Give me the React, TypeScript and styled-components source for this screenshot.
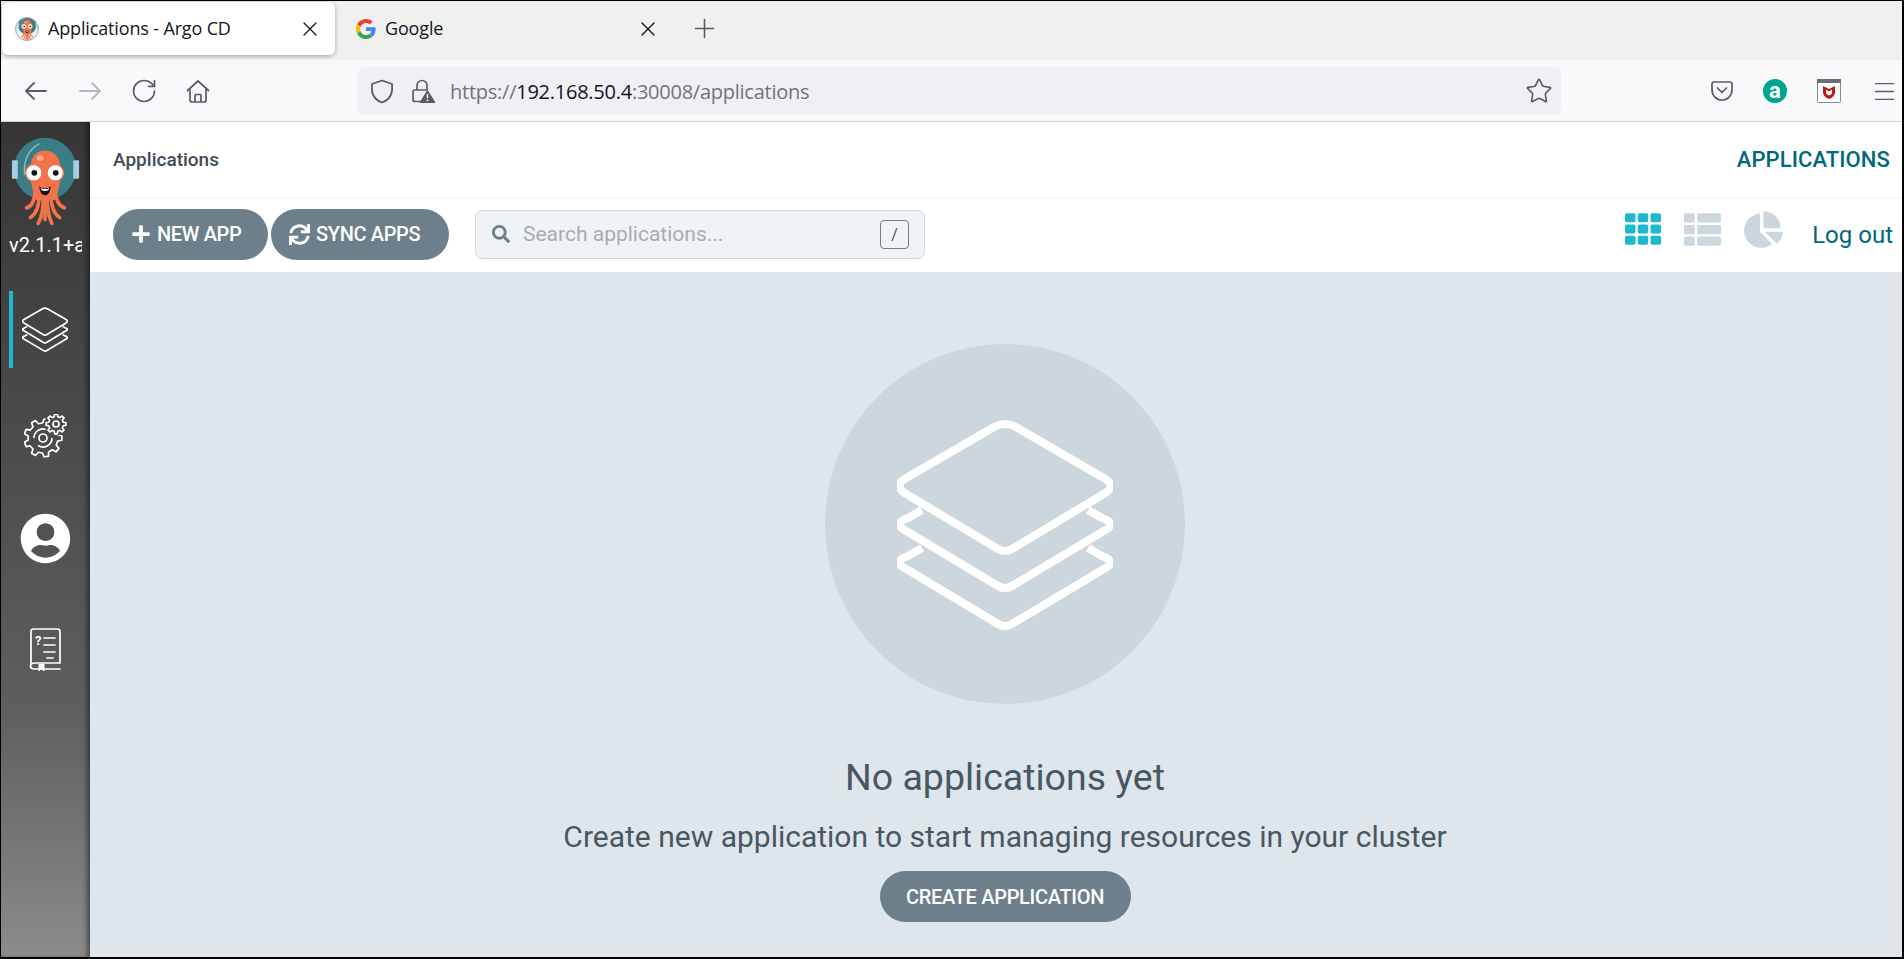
import * as React from 'react'
import styled, { createGlobalStyle } from 'styled-components'
import { RotateCw, Star, X, Plus, Menu } from 'lucide-react'
import { FaPlus, FaSync, FaSearch, FaTh, FaThList, FaChartPie, FaUserCircle } from 'react-icons/fa'

const GlobalStyle = createGlobalStyle`
  html, body {
    margin: 0;
    padding: 0;
    height: 100%;
    overflow: hidden;
  }
  body {
    font-family: Roboto, "Liberation Sans", sans-serif;
  }
`

const Frame = styled.div`
  box-sizing: border-box;
  width: 1904px;
  height: 959px;
  display: flex;
  flex-direction: column;
  overflow: hidden;
  border-style: solid;
  border-color: #000;
  border-width: 1px 2px 2px 1px;
  background: #fff;
`

const TabStrip = styled.div`
  flex: none;
  height: 59px;
  display: flex;
  align-items: flex-start;
  padding: 1px 0 0 1px;
  box-sizing: border-box;
  background: #f0f0f0;
  font-family: "Open Sans", "Noto Sans", sans-serif;
`

const Tab = styled.div<{ $active?: boolean }>`
  box-sizing: border-box;
  width: 333px;
  height: 53px;
  display: flex;
  align-items: center;
  padding: 0 13px 0 ${props => (props.$active ? '13px' : '16px')};
  margin-right: ${props => (props.$active ? '5px' : '16px')};
  border-radius: 6px;
  background: ${props => (props.$active ? '#fff' : 'transparent')};
  box-shadow: ${props => (props.$active ? '0 1px 4px rgba(0, 0, 0, 0.35)' : 'none')};
  color: #15141a;
`

const TabTitle = styled.span`
  flex: 1;
  margin: 0 0 2px 9px;
  font-size: 18px;
  letter-spacing: -0.15px;
  white-space: nowrap;
`

const NewTab = styled.div`
  height: 53px;
  display: flex;
  align-items: center;
  color: #5b5b66;
`

const NavBar = styled.div`
  flex: none;
  box-sizing: border-box;
  height: 62px;
  display: flex;
  align-items: center;
  padding: 1px 4px 0 8px;
  background: #f9f9fb;
  border-bottom: 1px solid #cfcfd8;
  color: #5b5b66;
  font-family: "Open Sans", "Noto Sans", sans-serif;
`

const NavButtons = styled.div`
  flex: none;
  display: grid;
  grid-template-columns: repeat(4, 54px);
  justify-items: center;
  align-items: center;
  width: 349px;
`

const UrlBar = styled.div`
  flex: none;
  box-sizing: border-box;
  width: 1203px;
  height: 48px;
  display: flex;
  align-items: center;
  padding: 0 8px 0 12px;
  border-radius: 6px;
  background: #f0f0f4;
`

const LockSlot = styled.div`
  display: flex;
  margin-left: 17px;
`

const UrlText = styled.div`
  flex: 1;
  margin: 1px 0 0 15px;
  font-size: 20px;
  letter-spacing: -0.25px;
  color: #72727d;
  white-space: nowrap;
`

const UrlHost = styled.span`
  color: #15141a;
`

const Extensions = styled.div`
  flex: 1;
  display: flex;
  align-items: center;
  justify-content: flex-end;
  gap: 30px;
`

const AmazonBadge = styled.div`
  width: 24px;
  height: 24px;
  border-radius: 50%;
  display: flex;
  align-items: center;
  justify-content: center;
  background: #00a58e;
  color: #fff;
  font-family: Roboto, sans-serif;
  font-size: 22px;
  font-weight: 700;
  line-height: 22px;
`

const AppArea = styled.div`
  flex: 1;
  min-height: 0;
  display: flex;
`

const Sidebar = styled.nav`
  flex: none;
  box-sizing: border-box;
  width: 89px;
  display: flex;
  flex-direction: column;
  background: linear-gradient(to bottom, #363636 0%, #474747 30%, #5e5e5e 70%, #8b8b8b 100%);
  box-shadow: inset -5px 0 5px -2px rgba(0, 0, 0, 0.45);
  overflow: hidden;
`

const LogoBox = styled.div`
  display: flex;
  padding: 8px 0 0 9px;
`

const Version = styled.div`
  width: 73px;
  margin: 6px 0 0 8px;
  overflow: hidden;
  white-space: nowrap;
  color: #fff;
  font-size: 20px;
  line-height: 24px;
`

const NavItem = styled.div<{ $gap: number; $active?: boolean }>`
  position: relative;
  flex: none;
  height: 77px;
  margin-top: ${props => props.$gap}px;
  display: flex;
  align-items: center;
  justify-content: center;
  padding-right: 1px;
  color: #fff;
  &::before {
    content: '';
    display: ${props => (props.$active ? 'block' : 'none')};
    position: absolute;
    left: 8px;
    top: 0;
    bottom: 0;
    width: 4px;
    background: #1fb8cf;
  }
`

const Main = styled.main`
  flex: 1;
  min-width: 0;
  display: flex;
  flex-direction: column;
`

const TopBar = styled.header`
  flex: none;
  box-sizing: border-box;
  height: 76px;
  display: flex;
  align-items: center;
  justify-content: space-between;
  padding: 0 12px 0 23px;
  border-bottom: 1px solid #eef1f4;
`

const PageTitle = styled.div`
  font-size: 19px;
  font-weight: 500;
  color: #3f4c56;
`

const PageLink = styled.div`
  font-size: 22px;
  font-weight: 500;
  letter-spacing: 0.1px;
  color: #00687c;
`

const ToolBar = styled.div`
  flex: none;
  box-sizing: border-box;
  height: 74px;
  display: flex;
  align-items: center;
  padding: 0 9px 2px 23px;
`

const PillButton = styled.button<{ $width: number }>`
  box-sizing: border-box;
  width: ${props => props.$width}px;
  height: 51px;
  display: inline-flex;
  align-items: center;
  gap: 6px;
  margin-right: 3px;
  padding: 0 0 0 18px;
  border: 0;
  border-radius: 26px;
  background: #6d7f8b;
  color: #fff;
  font-family: Roboto, sans-serif;
  font-size: 20px;
  font-weight: 500;
  letter-spacing: -0.35px;
`

const SearchBox = styled.div`
  box-sizing: border-box;
  width: 450px;
  height: 49px;
  margin-left: 23px;
  display: flex;
  align-items: center;
  padding: 0 15px 0 16px;
  border: 1px solid #ccd6dd;
  border-radius: 7px;
  background: #eff3f6;
  color: #6d7f8b;
`

const SearchText = styled.div`
  flex: 1;
  margin-left: 13px;
  font-size: 21px;
  color: #a3adb5;
`

const KeyHint = styled.div`
  box-sizing: border-box;
  width: 29px;
  height: 29px;
  display: flex;
  align-items: center;
  justify-content: center;
  border: 1px solid #6d7f8b;
  border-radius: 4px;
  font-size: 16px;
  color: #495763;
`

const ViewToggles = styled.div`
  margin: 0 0 10px auto;
  display: flex;
  align-items: center;
  gap: 23px;
`

const ViewIcon = styled.div<{ $active?: boolean }>`
  display: flex;
  color: ${props => (props.$active ? '#1fb8cf' : '#ccd6dd')};
`

const LogOut = styled.div`
  margin: 2px 0 0 29px;
  font-size: 24px;
  color: #00687c;
`

const EmptyState = styled.section`
  flex: 1;
  display: flex;
  flex-direction: column;
  align-items: center;
  padding: 72px 0 0 18px;
  background: #dee6eb;
  color: #495763;
`

const EmptyCircle = styled.div`
  width: 360px;
  height: 360px;
  flex: none;
  display: flex;
  align-items: center;
  justify-content: center;
  border-radius: 50%;
  background: #ccd6dd;
  color: #fff;
`

const EmptyTitle = styled.div`
  margin-top: 51px;
  font-size: 37.5px;
  line-height: 44px;
`

const EmptyText = styled.div`
  margin-top: 20px;
  font-size: 30px;
  line-height: 36px;
`

const CreateButton = styled(PillButton)`
  margin: 16px 0 0;
  padding: 0;
  justify-content: center;
  letter-spacing: -0.3px;
`

const Layers = ({ size }: { size: number }) => (
  <svg width={size} height={(size * 211) / 216} viewBox="0 -1 216 211" fill="none" stroke="currentColor" strokeWidth="8">
    <path d="M97 7 Q108 1 119 7 L205 57 Q222 66 205 75 L115 129 Q108 133 101 129 L11 75 Q-6 66 11 57 Z" />
    <path d="M25 90 L11 98 Q-6 104 11 112 L101 166 Q108 170 115 166 L205 112 Q222 104 205 98 L191 90" />
    <path d="M25 128 L11 136 Q-6 142 11 150 L101 204 Q108 208 115 204 L205 150 Q222 142 205 136 L191 128" />
  </svg>
)

// outline of a cog, teeth as trapezoids round the centre
const gearPath = (cx: number, cy: number, outer: number, inner: number, teeth: number) => {
  const step = (Math.PI * 2) / teeth
  const pts: string[] = []
  for (let i = 0; i < teeth; i++) {
    const a = i * step
    const at = (r: number, t: number) =>
      `${(cx + r * Math.cos(a + t * step)).toFixed(2)} ${(cy + r * Math.sin(a + t * step)).toFixed(2)}`
    pts.push(at(inner, -0.3), at(outer, -0.17), at(outer, 0.17), at(inner, 0.3))
  }
  return `M${pts.join(' L')} Z`
}

const SettingsIcon = () => (
  <svg width="43" height="44" viewBox="0 0 43 44" fill="none" stroke="currentColor" strokeWidth="1.7" strokeLinejoin="round">
    <mask id="gear-cut">
      <rect width="43" height="44" fill="#fff" stroke="none" />
      <circle cx="32" cy="10" r="11.5" fill="#000" stroke="none" />
    </mask>
    <g mask="url(#gear-cut)">
      <path d={gearPath(19, 24, 19, 15, 9)} />
      <path d="M10 24 A9 9 0 0 1 22 15.5" />
      <path d="M28 24 A9 9 0 0 1 14 31.5" />
    </g>
    <circle cx="19" cy="24" r="4" />
    <path d={gearPath(32, 10, 10, 7.5, 8)} />
    <circle cx="32" cy="10" r="3" />
  </svg>
)

const DocsIcon = () => (
  <svg width="32" height="43" viewBox="0 0 32 43" fill="none" stroke="currentColor" strokeWidth="1.7" strokeLinecap="round">
    <path d="M2 36 V3.500 Q2 1 4.500 1 H28.500 Q31 1 31 3.500 V35 H6 Q1.500 35 1.500 38 Q1.500 41 6 41 H31" />
    <path d="M15 10 H26 M15 17 H26 M15 24 H26 M18 30 H24" />
    <path d="M10 36 V43 L12.500 40.500 L15 43 V36" fill="currentColor" strokeWidth="1" />
    <text x="6" y="17" fill="currentColor" stroke="none" fontFamily="Roboto, sans-serif" fontSize="13" fontWeight="700">?</text>
  </svg>
)

const ArgoLogo = ({ width }: { width: number }) => (
  <svg width={width} height={(width * 100) / 74} viewBox="0 0 74 100">
    <circle cx="36" cy="40" r="32" fill="#3b7d87" />
    <path d="M15 46 Q13 24 30 14" fill="none" stroke="#8fbabd" strokeWidth="1.5" />
    <rect x="2" y="31" width="6" height="19" rx="1" fill="#a6cde2" />
    <rect x="65" y="31" width="6" height="19" rx="1" fill="#a6cde2" />
    <g fill="none" stroke="#f0734a" strokeWidth="3.8" strokeLinecap="round">
      <path d="M26 62 Q25 78 17 80" />
      <path d="M30 66 Q30 84 21 90" />
      <path d="M34 68 Q35 85 29 96" />
      <path d="M36 68 V92" />
      <path d="M38 68 Q38 85 43 96" />
      <path d="M42 66 Q42 84 51 90" />
      <path d="M46 62 Q48 78 56 80" />
    </g>
    <path d="M36 21 C25 21 21 30 21 42 C21 55 23 62 27 72 L46 72 C50 62 52 55 52 42 C52 30 47 21 36 21 Z" fill="#f0734a" />
    <ellipse cx="31" cy="29" rx="3.500" ry="3" fill="#f6a98f" />
    <circle cx="24.500" cy="44" r="8.500" fill="#fff" stroke="#f0734a" strokeWidth="1.500" />
    <circle cx="46.500" cy="44" r="8.500" fill="#fff" stroke="#f0734a" strokeWidth="1.500" />
    <circle cx="25" cy="44" r="3" fill="#111" />
    <circle cx="47" cy="44" r="3" fill="#111" />
    <path d="M30 58 Q36 62 42 58 Q41 67 36 67 Q31 67 30 58 Z" fill="#111" />
    <path d="M31.500 59.500 Q36 62 40.500 59.500 L39.500 62 Q36 63.500 32.500 62 Z" fill="#fff" />
  </svg>
)

const Favicon = styled.div`
  width: 24px;
  height: 24px;
  flex: none;
  box-sizing: border-box;
  display: flex;
  align-items: center;
  justify-content: center;
  overflow: hidden;
  border: 1px solid #a79fc9;
  border-radius: 50%;
  background: #eee;
`

const GoogleIcon = () => (
  <svg width="20" height="20" viewBox="0 0 48 48">
    <path fill="#ea4335" d="M24 9.500c3.500 0 6.700 1.200 9.200 3.600l6.900-6.900C35.900 2.400 30.500 0 24 0 14.600 0 6.500 5.400 2.600 13.200l8 6.200C12.400 13.700 17.700 9.500 24 9.500z" />
    <path fill="#4285f4" d="M47 24.500c0-1.600-.1-3.100-.4-4.500H24v9h12.900c-.6 3-2.200 5.500-4.700 7.200l7.700 6C44.400 38.600 47 32.100 47 24.500z" />
    <path fill="#fbbc05" d="M10.500 28.600c-.5-1.400-.8-3-.8-4.600s.3-3.200.8-4.600l-8-6.200C.9 16.500 0 20.100 0 24s.9 7.500 2.600 10.800l7.900-6.200z" />
    <path fill="#34a853" d="M24 48c6.500 0 11.900-2.100 15.900-5.800l-7.700-6c-2.200 1.400-4.900 2.300-8.200 2.300-6.300 0-11.600-4.200-13.500-10l-7.900 6.200C6.500 42.600 14.600 48 24 48z" />
  </svg>
)

const NavArrow = ({ flip, color }: { flip?: boolean; color?: string }) => (
  <svg width="22" height="18" viewBox="0 0 22 18" fill="none" stroke={color || 'currentColor'} strokeWidth="1.800" strokeLinecap="round" strokeLinejoin="round">
    <path d={flip ? 'M1 9 H21 M13 1 L21 9 L13 17' : 'M21 9 H1 M9 1 L1 9 L9 17'} />
  </svg>
)

const HomeIcon = () => (
  <svg width="26" height="25" viewBox="0 0 26 25" fill="none" stroke="currentColor" strokeWidth="1.700" strokeLinejoin="round">
    <path d="M2 12 L13 2 L24 12 M5 9.500 V21 Q5 23 7 23 H19 Q21 23 21 21 V9.500" />
    <path d="M10 23 V16.500 Q10 15.500 11 15.500 H15 Q16 15.500 16 16.500 V23" />
  </svg>
)

const ShieldIcon = () => (
  <svg width="24" height="25" viewBox="0 0 24 25" fill="none" stroke="currentColor" strokeWidth="1.800" strokeLinejoin="round">
    <path d="M12 1.500 L22 5 Q23 15 18.500 19.500 Q16 22 12 23.500 Q8 22 5.500 19.500 Q1 15 2 5 Z" />
  </svg>
)

const LockWarningIcon = () => (
  <svg width="24" height="24" viewBox="0 0 24 24" fill="none">
    <path d="M6 11 V6.500 A5 5 0 0 1 16 6.500 V11" stroke="#5b5b66" strokeWidth="1.700" />
    <path d="M10 22.500 H4 Q2 22.500 2 20.500 V13 Q2 11 4 11 H16" stroke="#5b5b66" strokeWidth="1.700" />
    <path d="M16.500 11.500 L24 23.500 H9 Z" fill="#5b5b66" stroke="#5b5b66" strokeLinejoin="round" />
    <path d="M16.500 15 V19 M16.500 20.500 V22" stroke="#fff" strokeWidth="1.600" />
  </svg>
)

const PocketIcon = () => (
  <svg width="22" height="20" viewBox="0 0 22 20" fill="none" stroke="#5b5b66" strokeWidth="1.700" strokeLinejoin="round" strokeLinecap="round">
    <path d="M3 1 H19 Q21 1 21 3 V9 A10 10 0 0 1 1 9 V3 Q1 1 3 1 Z" />
    <path d="M6.500 7 L11 11.500 L15.500 7" />
  </svg>
)

const McAfeeIcon = () => (
  <svg width="24" height="24" viewBox="0 0 24 24">
    <rect x="0.500" y="0.500" width="23" height="23" rx="1" fill="#fff" stroke="#8a8a92" />
    <rect x="0" y="0" width="24" height="4" fill="#6b7078" />
    <path d="M6 7 L9 8.500 L12 10 L15 8.500 L18 7 V14 Q17 18 12 20 Q7 18 6 14 Z" fill="#c01818" />
    <path d="M9 10.500 L12 12.500 L15 10.500 V14 Q14.500 15.500 12 16.500 Q9.500 15.500 9 14 Z" fill="#fff" />
  </svg>
)

const App = () => (
  <Frame>
    <GlobalStyle />
    <TabStrip>
      <Tab $active>
        <Favicon>
          <ArgoLogo width={21} />
        </Favicon>
        <TabTitle>Applications - Argo CD</TabTitle>
        <X size={24} strokeWidth={1.3} />
      </Tab>
      <Tab>
        <GoogleIcon />
        <TabTitle>Google</TabTitle>
        <X size={24} strokeWidth={1.3} />
      </Tab>
      <NewTab>
        <Plus size={31} strokeWidth={1.2} />
      </NewTab>
    </TabStrip>
    <NavBar>
      <NavButtons>
        <NavArrow />
        <NavArrow flip color="#b5b5bb" />
        <RotateCw size={28} strokeWidth={1.4} />
        <HomeIcon />
      </NavButtons>
      <UrlBar>
        <ShieldIcon />
        <LockSlot>
          <LockWarningIcon />
        </LockSlot>
        <UrlText>
          https://<UrlHost>192.168.50.4</UrlHost>:30008/applications
        </UrlText>
        <Star size={28} strokeWidth={1.4} />
      </UrlBar>
      <Extensions>
        <PocketIcon />
        <AmazonBadge>a</AmazonBadge>
        <McAfeeIcon />
        <Menu size={27} strokeWidth={1.2} />
      </Extensions>
    </NavBar>
    <AppArea>
      <Sidebar>
        <LogoBox>
          <ArgoLogo width={72} />
        </LogoBox>
        <Version>v2.1.1+a0c1b2d</Version>
        <NavItem $active $gap={34}>
          <Layers size={46} />
        </NavItem>
        <NavItem $gap={29}>
          <SettingsIcon />
        </NavItem>
        <NavItem $gap={26}>
          <FaUserCircle size={51} />
        </NavItem>
        <NavItem $gap={34}>
          <DocsIcon />
        </NavItem>
      </Sidebar>
      <Main>
        <TopBar>
          <PageTitle>Applications</PageTitle>
          <PageLink>APPLICATIONS</PageLink>
        </TopBar>
        <ToolBar>
          <PillButton $width={155}>
            <FaPlus size={20} />
            NEW APP
          </PillButton>
          <PillButton $width={178}>
            <FaSync size={21} />
            SYNC APPS
          </PillButton>
          <SearchBox>
            <FaSearch size={18} />
            <SearchText>Search applications...</SearchText>
            <KeyHint>/</KeyHint>
          </SearchBox>
          <ViewToggles>
            <ViewIcon $active>
              <FaTh size={36} />
            </ViewIcon>
            <ViewIcon>
              <FaThList size={37} />
            </ViewIcon>
            <ViewIcon>
              <FaChartPie size={39} />
            </ViewIcon>
          </ViewToggles>
          <LogOut>Log out</LogOut>
        </ToolBar>
        <EmptyState>
          <EmptyCircle>
            <Layers size={216} />
          </EmptyCircle>
          <EmptyTitle>No applications yet</EmptyTitle>
          <EmptyText>Create new application to start managing resources in your cluster</EmptyText>
          <CreateButton $width={251}>CREATE APPLICATION</CreateButton>
        </EmptyState>
      </Main>
    </AppArea>
  </Frame>
)

export default App
